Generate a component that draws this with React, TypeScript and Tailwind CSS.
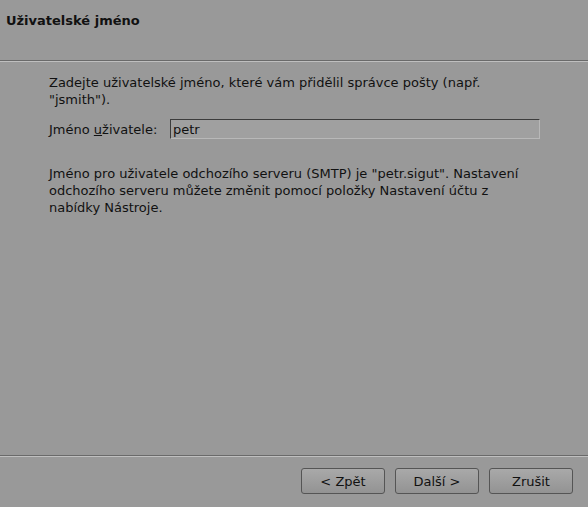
export default function App() {
  return (
    <div className="w-[588px] h-[507px] bg-[#999999] flex flex-col text-[#111111] font-['DejaVu_Sans',sans-serif] overflow-hidden">
      <header className="h-[60px] px-[6px] pt-[13px]">
        <h1 className="text-[13px] leading-[16px] font-bold">Uživatelské jméno</h1>
      </header>
      <div className="border-t border-t-[#6a6a6a] border-b border-b-[#bfbfbf]" />

      <main className="flex-1 pl-[49px] pr-[48px] pt-[12px] text-[13px] leading-[17px]">
        <p>Zadejte uživatelské jméno, které vám přidělil správce pošty (např. "jsmith").</p>

        <div className="flex items-center mt-[11px]">
          <label className="w-[121px] shrink-0">
            Jméno <span className="underline">u</span>živatele:
          </label>
          <div className="flex-1 h-[20px] flex items-center px-[2px] bg-[#a0a0a0] border border-t-[#3c3c3c] border-l-[#3c3c3c] border-r-[#b8b8b8] border-b-[#b8b8b8]">
            petr
          </div>
        </div>

        <p className="mt-[26px]">
          Jméno pro uživatele odchozího serveru (SMTP) je "petr.sigut". Nastavení odchozího serveru můžete změnit pomocí položky Nastavení účtu z nabídky Nástroje.
        </p>
      </main>

      <div className="border-t border-t-[#6a6a6a] border-b border-b-[#bfbfbf]" />
      <footer className="h-[50px] flex justify-end items-start gap-[10px] pr-[15px] pt-[11px] text-[13px]">
        <button className="w-[84px] h-[26px] pt-[2px] rounded-[3px] border border-[#555555] bg-gradient-to-b from-[#a9a9a9] to-[#939393]">
          &lt; Zpět
        </button>
        <button className="w-[84px] h-[26px] pt-[2px] rounded-[3px] border border-[#555555] bg-gradient-to-b from-[#a9a9a9] to-[#939393]">
          Další &gt;
        </button>
        <button className="w-[84px] h-[26px] pt-[2px] rounded-[3px] border border-[#555555] bg-gradient-to-b from-[#a9a9a9] to-[#939393]">
          Zrušit
        </button>
      </footer>
    </div>
  );
}
